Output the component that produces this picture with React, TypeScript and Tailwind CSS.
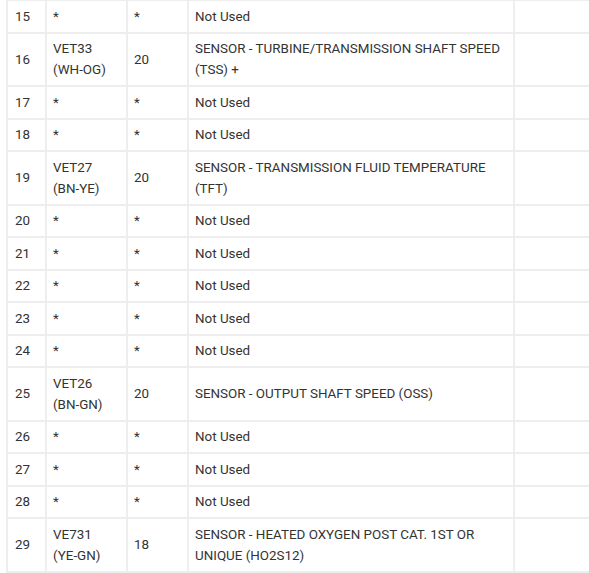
import React from "react";

type Row = [string, string[], string, string[]];

const rows: Row[] = [
  ["15", ["*"], "*", ["Not Used"]],
  ["16", ["VET33", "(WH-OG)"], "20", ["SENSOR - TURBINE/TRANSMISSION SHAFT SPEED", "(TSS) +"]],
  ["17", ["*"], "*", ["Not Used"]],
  ["18", ["*"], "*", ["Not Used"]],
  ["19", ["VET27", "(BN-YE)"], "20", ["SENSOR - TRANSMISSION FLUID TEMPERATURE", "(TFT)"]],
  ["20", ["*"], "*", ["Not Used"]],
  ["21", ["*"], "*", ["Not Used"]],
  ["22", ["*"], "*", ["Not Used"]],
  ["23", ["*"], "*", ["Not Used"]],
  ["24", ["*"], "*", ["Not Used"]],
  ["25", ["VET26", "(BN-GN)"], "20", ["SENSOR - OUTPUT SHAFT SPEED (OSS)"]],
  ["26", ["*"], "*", ["Not Used"]],
  ["27", ["*"], "*", ["Not Used"]],
  ["28", ["*"], "*", ["Not Used"]],
  ["29", ["VE731", "(YE-GN)"], "18", ["SENSOR - HEATED OXYGEN POST CAT. 1ST OR", "UNIQUE (HO2S12)"]],
];

const cell = "border-2 border-[#eeeeee] px-[6px] py-[4.75px] align-middle leading-[21px]";

export default function App() {
  return (
    <div
      className="w-[589px] h-[573px] overflow-hidden bg-white pl-[6px] text-[13.4px] text-[#333333]"
      style={{ fontFamily: "Roboto, 'Liberation Sans', sans-serif" }}
    >
      <table className="border-collapse table-fixed w-[640px] -mt-[1px]">
        <colgroup>
          <col className="w-[39px]" />
          <col className="w-[81px]" />
          <col className="w-[61px]" />
          <col className="w-[326px]" />
          <col className="w-[133px]" />
        </colgroup>
        <tbody>
          {rows.map(([n, wire, g, desc]) => (
            <tr key={n}>
              <td className={cell + " pl-[7px]"}>{n}</td>
              <td className={cell}>
                {wire.map((w, i) => (
                  <div key={i}>{w}</div>
                ))}
              </td>
              <td className={cell}>{g}</td>
              <td className={cell}>
                {desc.map((d, i) => (
                  <div key={i}>{d}</div>
                ))}
              </td>
              <td className={cell}></td>
            </tr>
          ))}
        </tbody>
      </table>
    </div>
  );
}
